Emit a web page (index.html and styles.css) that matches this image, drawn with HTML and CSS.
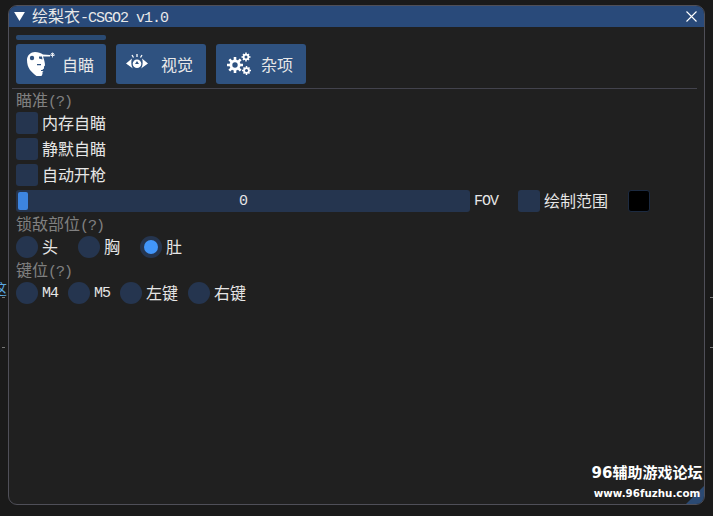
FILE: index.html
```html
<!DOCTYPE html>
<html lang="zh">
<head>
<meta charset="utf-8">
<title>绘梨衣-CSGO2</title>
<link rel="stylesheet" href="styles.css">
</head>
<body>
<div class="edge-glyph">这</div>
<div class="edge-dash dash-a"></div>
<div class="edge-dash dash-b"></div>
<div class="edge-dash dash-c"></div>
<div class="edge-dash dash-d"></div>
<main class="window">
  <header class="titlebar">
    <svg class="collapse" viewBox="0 0 12 10"><path d="M0 0H12L6 10Z" fill="#fff"/></svg>
    <span class="title">绘梨衣<span class="lat">-CSGO2 v1.0</span></span>
    <svg class="close" viewBox="0 0 11 11"><path d="M.5.5 10.5 10.5M10.5.5.5 10.5" stroke="#fff" stroke-width="1.1" fill="none"/></svg>
  </header>
  <div class="body">
    <div class="tabline"></div>
    <nav class="tabs">
      <button class="tab">
        <svg class="ico ico-aim" viewBox="0 0 30 26"><path fill="#fff" d="M1 9C1 4 5 1 9 1c3 0 6 1 8 2.500l7 .5 0 1.500-7 0c1 3 2 6 2 9l-1 1 0 2-1.500 1 1 1.500-1 1 0 2-1 2-5 0C9 24 6 21 4 19 2 16 1 13 1 9Z"/><circle cx="6" cy="7" r="2.200" fill="#2f5280"/><path fill="#2f5280" d="M11 13h4v1.200h-4zM13 5.500h3l.5 3-3.500-1zM15 19h3v1h-3z"/><path stroke="#fff" stroke-width=".8" d="M24 4h5M26.500 1.500v5M25 2l3 3M28 2l-3 3"/></svg>
        <span class="tab-label lab-aim">自瞄</span>
      </button>
      <button class="tab">
        <svg class="ico ico-eye" viewBox="0 0 22 16"><path fill="#fff" d="M0 9.500 6 4.500C5 7 5 12 7 14.500ZM22 9.500 16 4.500c1 2.500 1 7.500-1 10Z"/><circle cx="11" cy="9.700" r="4.300" fill="#fff"/><path fill="#2f5280" d="M11 7l2 3H9z"/><path stroke="#fff" stroke-width="1.300" d="M11 0v3M6 1l1.500 2.500M16 1l-1.500 2.500"/></svg>
        <span class="tab-label lab-eye">视觉</span>
      </button>
      <button class="tab">
        <svg class="ico ico-gear" viewBox="0 0 26 24">
          <g fill="#fff">
            <circle cx="9" cy="13" r="5.500"/><path stroke="#fff" stroke-width="2.600" d="M9 5v16M1 13h16M3.300 7.300l11.400 11.400M14.700 7.300 3.300 18.700"/>
            <circle cx="20" cy="5" r="3.300"/><path stroke="#fff" stroke-width="1.500" d="M20 .5v9M15.500 5h9M17 2l6 6M23 2l-6 6"/>
            <circle cx="20.500" cy="18.500" r="3.300"/><path stroke="#fff" stroke-width="1.500" d="M20.500 14v9M16 18.500h9M17.500 15.500l6 6M23.500 15.500l-6 6"/>
          </g>
          <circle cx="9" cy="13" r="2.700" fill="#2f5280"/><circle cx="20" cy="5" r="1.500" fill="#2f5280"/><circle cx="20.500" cy="18.500" r="1.500" fill="#2f5280"/>
        </svg>
        <span class="tab-label lab-gear">杂项</span>
      </button>
    </nav>
    <hr class="sep">
    <div class="stack">
      <div class="hint">瞄准<span class="lat">(?)</span></div>
      <label class="row"><i class="box"></i>内存自瞄</label>
      <label class="row"><i class="box"></i>静默自瞄</label>
      <label class="row"><i class="box"></i>自动开枪</label>
      <div class="row">
        <div class="slider"><i class="grab"></i><span class="lat cell">0</span></div>
        <span class="lat cell fov">FOV</span>
        <i class="box box-far"></i>
        <span>绘制范围</span>
        <i class="swatch"></i>
      </div>
      <div class="hint">锁敌部位<span class="lat">(?)</span></div>
      <div class="row radios-wide">
        <label class="radio"><i class="dot"></i>头</label>
        <label class="radio"><i class="dot"></i>胸</label>
        <label class="radio"><i class="dot on"></i>肚</label>
      </div>
      <div class="hint">键位<span class="lat">(?)</span></div>
      <div class="row radios-tight">
        <label class="radio"><i class="dot"></i><span class="lat cell">M4</span></label>
        <label class="radio"><i class="dot"></i><span class="lat cell">M5</span></label>
        <label class="radio"><i class="dot"></i>左键</label>
        <label class="radio"><i class="dot"></i>右键</label>
      </div>
    </div>
  </div>
  <div class="grip"></div>
</main>
<div class="mark">
  <div class="mark-top">96辅助游戏论坛</div>
  <div class="mark-url">www.96fuzhu.com</div>
</div>
</body>
</html>
```

FILE: styles.css
```css
* { box-sizing: border-box; }
html, body { height: 100%; }
body {
  margin: 0;
  padding: 5px 8px 11px;
  background: #1a1a1a;
  color: #e6e6e6;
  font: 16px/20px "Noto Sans CJK SC", "Liberation Mono", monospace;
  overflow: hidden;
  position: relative;
}
.lat { font-family: "Liberation Mono", monospace; font-size: 15px; letter-spacing: -1px; }
.cell { line-height: 24px; }
.window {
  position: relative;
  height: 500px;
  background: #202020;
  border: 1px solid #4f4f58;
  border-radius: 9px;
  overflow: hidden;
}
.titlebar {
  height: 21px;
  background: #294a7a;
  display: flex;
  align-items: center;
  padding: 0 4px 0 5px;
  color: #fff;
}
.collapse { width: 11px; height: 9px; }
.title { margin-left: 7px; color: #e8e8e8; }
.close { width: 11px; height: 11px; margin-left: auto; margin-right: 3px; }
.body { padding: 8px 7px 0; }
.tabline { width: 90px; height: 5px; background: #2a4a72; border-radius: 2px; }
.tabs { display: flex; gap: 10px; margin-top: 4px; }
.tab {
  width: 90px;
  height: 40px;
  padding: 0;
  border: 0;
  border-radius: 3px;
  background: #2f5280;
  color: #e8e8e8;
  font: inherit;
  display: flex;
  align-items: center;
}
.ico { flex: none; }
.ico-aim { width: 30px; height: 26px; margin-left: 10px; }
.ico-eye { width: 22px; height: 16px; margin-left: 10px; margin-top: -4px; }
.ico-gear { width: 26px; height: 24px; margin-left: 10px; }
.lab-aim { margin-left: 6px; }
.lab-eye { margin-left: 13px; }
.lab-gear { margin-left: 9px; }
.sep { height: 1px; margin: 4px 0 0 -4px; border: 0; background: #43434d; }
.stack { display: flex; flex-direction: column; gap: 4px; margin-top: 3px; }
.hint { height: 16px; line-height: 14px; color: #808080; }
.row { height: 22px; display: flex; align-items: flex-start; color: #e6e6e6; }
.box {
  width: 22px;
  height: 22px;
  margin-right: 4px;
  border-radius: 3px;
  background: #25354f;
  flex: none;
}
.box-far { margin-left: 20px; }
.slider {
  position: relative;
  width: 454px;
  height: 22px;
  border-radius: 3px;
  background: #25354f;
  display: flex;
  justify-content: center;
}
.grab {
  position: absolute;
  left: 2px;
  top: 2px;
  width: 10px;
  height: 18px;
  border-radius: 2px;
  background: #3d85e0;
}
.fov { margin-left: 4px; }
.swatch {
  width: 22px;
  height: 22px;
  margin-left: 20px;
  border-radius: 3px;
  background: #000;
  border: 1px solid #1c2a40;
}
.radios-wide { gap: 20px; }
.radios-tight { gap: 10px; }
.radio { display: flex; align-items: flex-start; gap: 4px; }
.dot {
  position: relative;
  width: 22px;
  height: 22px;
  border-radius: 50%;
  background: #25354f;
  flex: none;
}
.on::after {
  content: "";
  position: absolute;
  inset: 4px;
  border-radius: 50%;
  background: #4296fa;
}
.grip {
  position: absolute;
  right: 0;
  bottom: 0;
  width: 0;
  height: 0;
  border-left: 18px solid transparent;
  border-bottom: 18px solid #2b4a73;
}
.mark {
  position: absolute;
  left: 588px;
  top: 465px;
  width: 118px;
  color: #fff;
  font-weight: 700;
  text-align: center;
}
.mark-top { font: 700 15px/17px "DejaVu Sans", "Noto Sans CJK SC", sans-serif; white-space: nowrap; }
.mark-url { margin-top: 5px; font: 700 10.300px/12px "DejaVu Sans", sans-serif; white-space: nowrap; }
.edge-glyph { position: absolute; left: -7px; top: 278px; width: 15px; color: #5aa7e0; font-size: 14px; overflow: hidden; }
.edge-dash { position: absolute; width: 3px; height: 1px; background: #777; }
.dash-a { left: 2px; top: 297px; }
.dash-b { left: 2px; top: 347px; }
.dash-c { right: 0; top: 297px; }
.dash-d { right: 0; top: 347px; }
```
